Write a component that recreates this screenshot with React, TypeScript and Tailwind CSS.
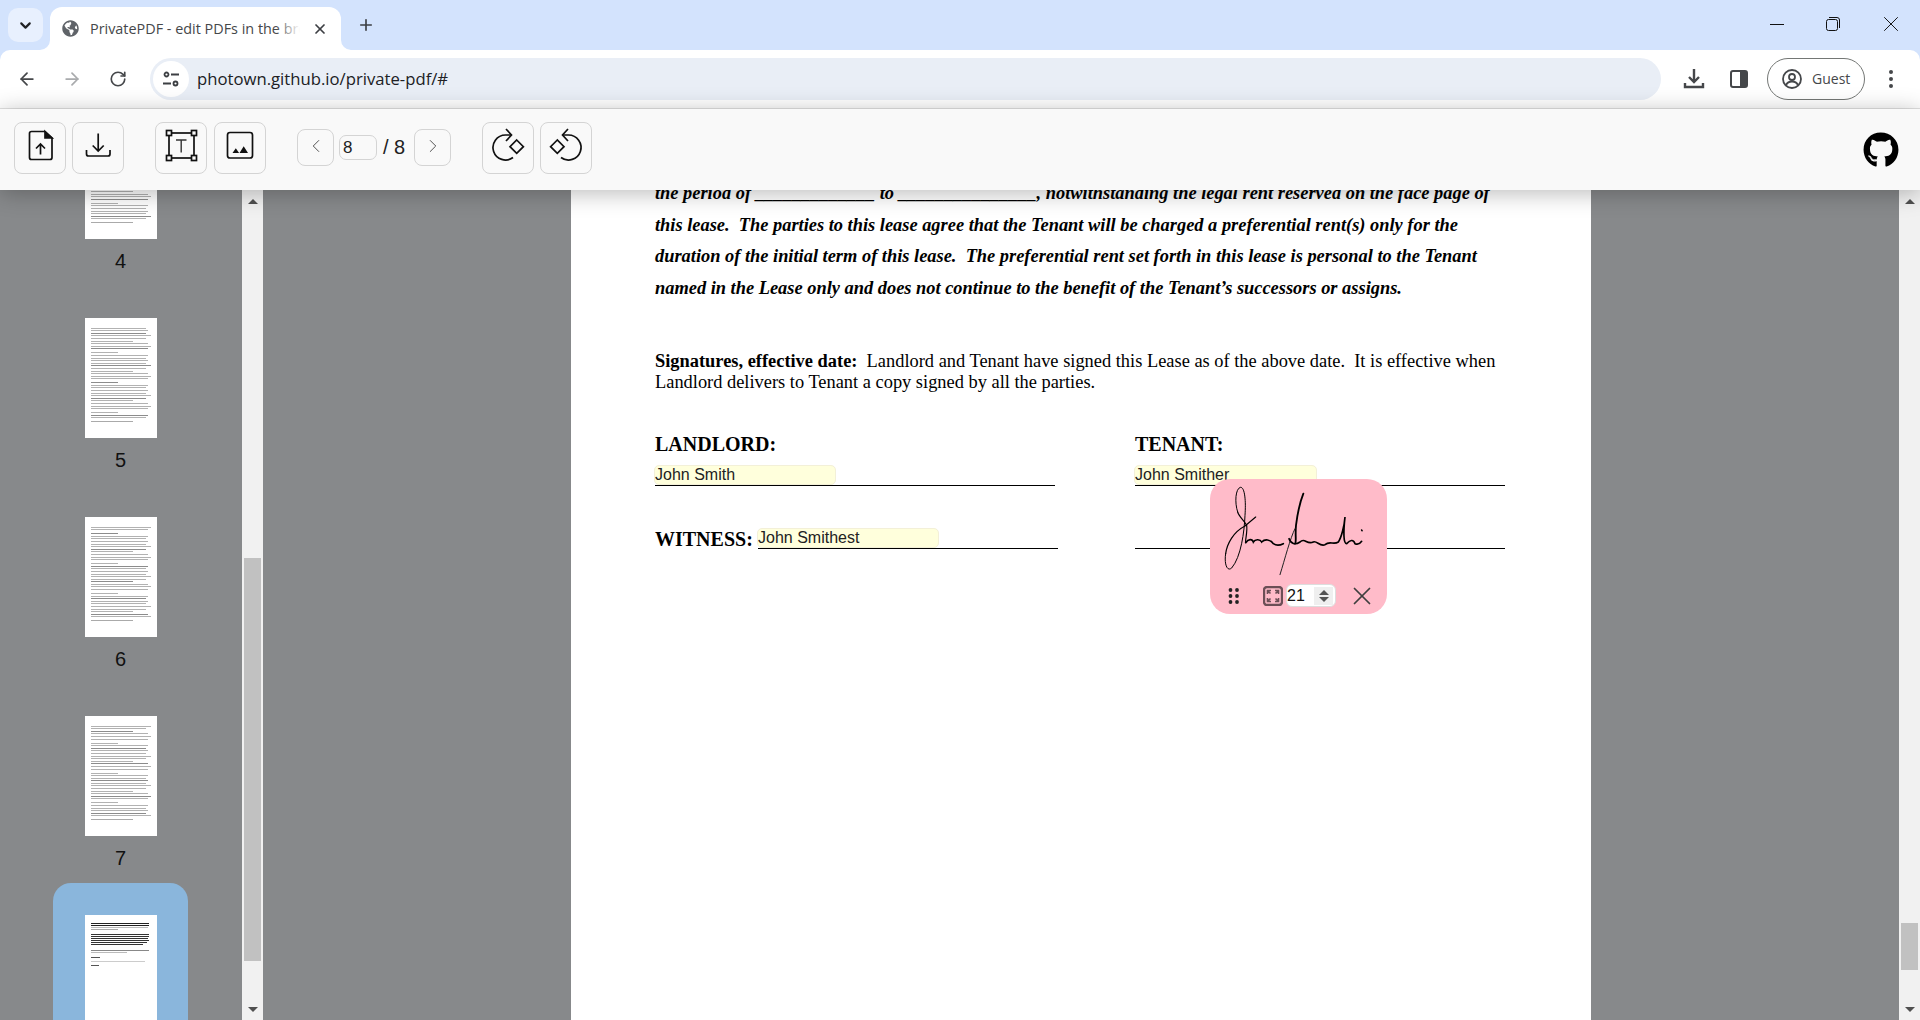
import { ArrowLeft, ArrowRight, ChevronDown, ChevronLeft, ChevronRight, Plus, RotateCw, X } from "lucide-react";
import { FaGithub, FaGlobeAmericas } from "react-icons/fa";

type Row = { w: number; c?: string; mt?: number; h?: number };

const textRows = (seed: number): Row[] => {
	const rows: Row[] = [];
	for (let i = 0; i < 34; i++) {
		const v = (i * 7 + seed * 5) % 11;
		rows.push({
			w: v === 0 ? 45 : v === 5 ? 70 : 92 + (v % 3) * 4,
			c: i % 6 === 2 ? "#8c8c8c" : "#b2b2b2",
			mt: v === 0 ? 3 : 1.6,
			h: 1,
		});
	}
	return rows;
};

const lastPageRows: Row[] = [
	{ w: 98, c: "#222", h: 1, mt: 0 },
	{ w: 98, c: "#222", h: 1, mt: 1 },
	{ w: 95, c: "#bbb", h: 1, mt: 1 },
	{ w: 45, c: "#aaa", h: 1, mt: 1 },
	{ w: 97, c: "#333", h: 1, mt: 4 },
	{ w: 98, c: "#333", h: 1, mt: 1 },
	{ w: 96, c: "#333", h: 1, mt: 1 },
	{ w: 98, c: "#333", h: 1, mt: 1 },
	{ w: 94, c: "#333", h: 1, mt: 1 },
	{ w: 88, c: "#333", h: 1, mt: 1 },
	{ w: 98, c: "#888", h: 1, mt: 5 },
	{ w: 60, c: "#bbb", h: 1, mt: 1 },
	{ w: 16, c: "#555", h: 1, mt: 4 },
	{ w: 90, c: "#ccc", h: 1, mt: 3 },
	{ w: 14, c: "#555", h: 1, mt: 3 },
];

function PageThumb({ rows, foot }: { rows: Row[]; foot?: boolean }) {
	return (
		<div className="w-[72px] h-[120px] bg-white px-[6px] pt-[8px] overflow-hidden">
			<div className="blur-[0.5px]">
				{rows.map((r, i) => (
					<div
						key={i}
						style={{ width: `${r.w}%`, height: r.h, marginTop: r.mt, backgroundColor: r.c }}
					/>
				))}
				{foot && <div className="mt-[3px] w-[70%] h-px bg-[#aaa]" />}
			</div>
		</div>
	);
}

function SidebarItem({ n, selected }: { n: number; selected?: boolean }) {
	return (
		<div className={`w-[135px] ml-[53px] pt-8 pb-[13px] flex flex-col items-center shrink-0 rounded-[18px] ${selected ? "bg-[#8ab6dc]" : ""}`}>
			<PageThumb rows={selected ? lastPageRows : textRows(n)} foot={!selected} />
			{!selected && <div className="mt-[10px] h-6 leading-6 text-[20px] text-[#111]">{n}</div>}
		</div>
	);
}

function ScrollBar({ before, thumb }: { before: string; thumb: string }) {
	return (
		<div className="w-[21px] shrink-0 bg-[#f1f1f1] flex flex-col items-center">
			<div className="h-[14px] w-full flex items-end justify-center">
				<div className="w-0 h-0 border-x-[5px] border-x-transparent border-b-[5px] border-b-[#505050]" />
			</div>
			<div className={`${before} shrink-0`} />
			<div className={`${thumb} w-[17px] bg-[#c1c1c1] shrink-0`} />
			<div className="flex-1" />
			<div className="h-[17px] w-full flex items-start justify-center pt-1">
				<div className="w-0 h-0 border-x-[5px] border-x-transparent border-t-[5px] border-t-[#505050]" />
			</div>
		</div>
	);
}

function ToolButton({ children }: { children: React.ReactNode }) {
	return (
		<button className="w-[52px] h-[52px] shrink-0 rounded-[8px] border border-[#d4d4d4] bg-[#f9f9f9]">
			{children}
		</button>
	);
}

function Icon({ children, className }: { children: React.ReactNode; className?: string }) {
	return (
		<svg width="50" height="50" viewBox="0 0 50 50" fill="none" stroke="#111" strokeWidth="1.7" className={className}>
			{children}
		</svg>
	);
}

function RotateIcon({ className }: { className?: string }) {
	return (
		<Icon className={className}>
			<path d="M28 12H22.5A12.5 12.5 0 1 0 30 34.5" />
			<path d="M23 6l5.500 6-5.500 6" />
			<path d="M33.700 17l6.700 6.700-6.700 6.700-6.700-6.700Z" />
		</Icon>
	);
}

function Tab() {
	return (
		<div className="relative ml-[7px] mt-[7px] w-[291px] h-[43px] bg-white rounded-t-[12px] flex items-center pl-[12px] pr-[13px]">
			<svg width="10" height="10" viewBox="0 0 10 10" className="absolute -left-[10px] bottom-0">
				<path d="M10 0V10H0A10 10 0 0 0 10 0Z" fill="#fff" />
			</svg>
			<svg width="10" height="10" viewBox="0 0 10 10" className="absolute -right-[10px] bottom-0">
				<path d="M0 0V10H10A10 10 0 0 1 0 0Z" fill="#fff" />
			</svg>
			<FaGlobeAmericas size={17} className="text-[#5f6368] shrink-0" />
			<div className="relative ml-[11px] w-[210px] overflow-hidden whitespace-nowrap text-[14.4px] text-[#45474a] font-['Open_Sans',sans-serif]">
				PrivatePDF - edit PDFs in the browser
				<div className="absolute right-0 inset-y-0 w-6 bg-gradient-to-r from-transparent to-white" />
			</div>
			<X size={16} strokeWidth={2.6} className="ml-auto text-[#3c3f43]" />
		</div>
	);
}

function BrowserChrome() {
	return (
		<div className="shrink-0">
			<div className="h-[50px] bg-[#d3e3fd] flex items-start">
				<div className="ml-2 mt-2 w-[35px] h-[34px] rounded-[10px] bg-[#e8f0fe] flex items-center justify-center">
					<ChevronDown size={17} strokeWidth={3} className="text-[#202124]" />
				</div>
				<Tab />
				<Plus size={18} strokeWidth={2.2} className="ml-4 mt-4 text-[#3c3f43]" />
				<div className="ml-auto mt-[11px] flex items-center">
					<div className="w-[14px] h-px bg-[#111] mr-[42px]" />
					<svg width="14" height="14" viewBox="0 0 14 14" fill="none" stroke="#111" className="mr-[38px]">
						<rect x="0.5" y="2.5" width="11" height="11" rx="2" />
						<path d="M3 .5h8a2.5 2.5 0 0 1 2.5 2.5v8" />
					</svg>
					<X size={26} strokeWidth={0.9} className="mr-4 text-[#111]" />
				</div>
			</div>
			<div className="h-[59px] bg-[#d3e3fd]">
				<div className="h-[58px] bg-white rounded-t-[10px] flex items-center">
					<ArrowLeft size={20} strokeWidth={2.1} className="ml-[17px] text-[#45474a]" />
					<ArrowRight size={20} strokeWidth={2.1} className="ml-[25px] text-[#a9abad]" />
					<RotateCw size={18} strokeWidth={2.2} className="ml-[27px] text-[#45474a]" />
					<div className="ml-[23px] w-[1511px] h-[42px] rounded-full bg-[#e9eef6] flex items-center pl-[3px]">
						<div className="w-9 h-9 rounded-full bg-white flex items-center justify-center">
							<svg width="18" height="18" viewBox="0 0 18 18" fill="none" stroke="#3c3f43" strokeWidth="1.8">
								<circle cx="4.5" cy="4.5" r="2" />
								<path d="M9 4.5h8M1 13.5h8" />
								<circle cx="13.5" cy="13.5" r="2" />
							</svg>
						</div>
						<span className="ml-[8px] text-[16.7px] text-[#202124] font-['Open_Sans',sans-serif]">photown.github.io/private-pdf/#</span>
					</div>
					<svg width="22" height="22" viewBox="0 0 22 22" fill="none" stroke="#45474a" strokeWidth="2.4" className="ml-[22px]">
						<path d="M11 1v12M6 9l5 5 5-5" />
						<path d="M2 15v4h18v-4" />
					</svg>
					<svg width="18" height="18" viewBox="0 0 18 18" className="ml-[25px]">
						<rect x="1" y="1" width="16" height="16" rx="2" fill="none" stroke="#45474a" strokeWidth="2" />
						<rect x="10" y="1" width="7" height="16" fill="#45474a" />
					</svg>
					<div className="ml-[19px] w-[98px] h-[42px] rounded-full border border-[#747775] flex items-center pl-[14px]">
						<svg width="20" height="20" viewBox="0 0 20 20" fill="none" stroke="#45474a" strokeWidth="1.8">
							<circle cx="10" cy="10" r="9" />
							<circle cx="10" cy="8" r="3" />
							<path d="M4 16c1.5-3 3.5-3.5 6-3.5s4.5.5 6 3.5" />
						</svg>
						<span className="ml-[10px] pb-px text-[14px] text-[#45474a] font-['Open_Sans',sans-serif]">Guest</span>
					</div>
					<div className="ml-[24px] flex flex-col gap-[3px]">
						<div className="w-1 h-1 rounded-full bg-[#45474a]" />
						<div className="w-1 h-1 rounded-full bg-[#45474a]" />
						<div className="w-1 h-1 rounded-full bg-[#45474a]" />
					</div>
				</div>
				<div className="h-px bg-[#e3e3e3]" />
			</div>
		</div>
	);
}

function Toolbar() {
	return (
		<div className="relative z-10 h-[81px] shrink-0 bg-[#f9f9f9] shadow-[0_3px_22px_rgba(0,0,0,0.28)] flex items-start pt-[13px] pl-[14px] text-[#222]">
			<div className="flex gap-[6px]">
				<ToolButton>
					<Icon>
						<path d="M16.5 8.5H30L37 15V34.5a2 2 0 0 1-2 2H16.5a2 2 0 0 1-2-2V10.5a2 2 0 0 1 2-2Z" />
						<path d="M30 8.5L37 15H30Z" fill="#111" />
						<path d="M25.5 31.5V21M21 25.500l4.500-4.500 4.500 4.500" />
					</Icon>
				</ToolButton>
				<ToolButton>
					<Icon>
						<path d="M13.5 27v4a2 2 0 0 0 2 2H35a2 2 0 0 0 2-2v-4" />
						<path d="M25.2 10.5V28M19.7 22.5l5.500 5.500 5.500-5.500" />
					</Icon>
				</ToolButton>
			</div>
			<div className="ml-[31px] flex gap-[7px]">
				<ToolButton>
					<Icon>
						<rect x="13" y="10" width="25" height="25" />
						<path d="M20 17h10.5M25.2 17v12.5" stroke="#333" strokeWidth="1.4" />
						<g fill="#f9f9f9">
							<rect x="10.5" y="7.5" width="5" height="5" />
							<rect x="35.5" y="7.5" width="5" height="5" />
							<rect x="10.5" y="32.5" width="5" height="5" />
							<rect x="35.5" y="32.5" width="5" height="5" />
						</g>
					</Icon>
				</ToolButton>
				<ToolButton>
					<Icon>
						<rect x="12.5" y="9.5" width="25" height="25.5" rx="2.5" />
						<path d="M17.5 30l3.3-4.800 3.3 4.800ZM24.5 30l4.200-6.800 4.300 6.800Z" fill="#111" stroke="none" />
					</Icon>
				</ToolButton>
			</div>
			<div className="ml-[31px] mt-[7px] flex items-start">
				<button className="w-[37px] h-[37px] rounded-[8px] border border-[#d4d4d4] flex items-center justify-center pb-1">
					<ChevronLeft size={22} strokeWidth={1} className="text-[#444]" />
				</button>
				<input
					readOnly
					value="8"
					className="ml-[5px] mt-[6px] w-[38px] h-[25px] rounded-[7px] border border-[#d4d4d4] pl-[3px] text-[17px] text-[#222] font-['Liberation_Sans',sans-serif]"
				/>
				<span className="ml-[6px] w-[31px] h-[37px] leading-[37px] text-[20px] font-['Liberation_Sans',sans-serif]">/ 8</span>
				<button className="w-[37px] h-[37px] rounded-[8px] border border-[#d4d4d4] flex items-center justify-center pb-1">
					<ChevronRight size={22} strokeWidth={1} className="text-[#444]" />
				</button>
			</div>
			<div className="ml-[31px] flex gap-[6px]">
				<ToolButton>
					<RotateIcon />
				</ToolButton>
				<ToolButton>
					<RotateIcon className="-scale-x-100" />
				</ToolButton>
			</div>
			<FaGithub size={36} className="ml-auto mr-[21px] mt-[10px] text-black" />
		</div>
	);
}

function SignatureWidget() {
	return (
		<div className="absolute left-[639px] top-[301px] w-[177px] h-[135px] rounded-[20px] bg-[#ffbbc9] flex flex-col">
			<svg width="170" height="100" viewBox="0 0 510 300" fill="none" stroke="#000" strokeLinecap="round" className="ml-[5px] mt-[3px] shrink-0">
				<path d="M68 90C58 60 62 20 76 16C90 14 93 60 90 100C88 150 78 225 50 258C36 270 27 245 32 215" strokeWidth="3" />
				<path d="M32 215C36 185 55 150 90 132L122 105" strokeWidth="3.5" />
				<path d="M68 90C72 105 88 115 95 130C98 150 90 175 92 182" strokeWidth="3.5" />
				<path d="M92 182C100 170 112 170 115 180C120 172 135 170 140 180C150 170 165 172 175 185C185 192 195 190 205 185" strokeWidth="5" />
				<path d="M265 35C255 60 248 90 243 130C240 160 245 180 240 185" strokeWidth="5.5" />
				<path d="M240 140C225 170 210 230 195 278" strokeWidth="3" stroke="#222" />
				<path d="M222 170C228 185 240 190 255 180C270 165 275 190 295 180C305 175 315 195 330 188C345 175 355 190 370 180C380 165 388 130 390 105C385 150 385 185 395 185C405 175 415 170 420 185C430 190 435 185 440 178" strokeWidth="5" />
				<path d="M440 144l1 2" strokeWidth="5" />
			</svg>
			<div className="relative flex items-center h-[23px] mt-[2px]">
				<svg width="12" height="18" viewBox="0 0 12 18" fill="#222" className="ml-[18px]">
					<circle cx="2.5" cy="3" r="1.9" />
					<circle cx="9" cy="3" r="1.9" />
					<circle cx="2.5" cy="9" r="1.9" />
					<circle cx="9" cy="9" r="1.9" />
					<circle cx="2.5" cy="15" r="1.9" />
					<circle cx="9" cy="15" r="1.9" />
				</svg>
				<svg width="20" height="20" viewBox="0 0 20 20" fill="none" stroke="#6c4e56" className="ml-[23px] mt-[1px]">
					<rect x="1" y="1" width="18" height="18" rx="3" strokeWidth="2.4" />
					<path d="M4.5 4.500l3 3M4.500 8V4.500H8M15.500 4.500l-3 3M12 4.500h3.500V8M4.500 15.500l3-3M4.500 12v3.500H8M15.500 15.500l-3-3M12 15.500h3.500V12" strokeWidth="1.6" />
				</svg>
				<div className="ml-[3px] w-[50px] h-[23px] rounded-[6px] bg-white border border-[#ddd] flex items-center text-[16px] text-[#111] font-['Liberation_Sans',sans-serif]">
					21
					<div className="ml-auto mr-[2px] w-[19px] h-[18px] bg-[#efefef] flex flex-col items-center justify-center gap-[2px]">
						<div className="w-0 h-0 border-x-[5px] border-x-transparent border-b-[5px] border-b-[#555]" />
						<div className="w-0 h-0 border-x-[5px] border-x-transparent border-t-[5px] border-t-[#555]" />
					</div>
				</div>
				<X size={30} strokeWidth={1.4} className="ml-[11px] text-[#3f3f3f]" />
			</div>
		</div>
	);
}

function FieldLine({ value, lineWidth, inputWidth }: { value?: string; lineWidth: string; inputWidth?: string }) {
	return (
		<div className={`relative h-[21px] border-b border-black ${lineWidth}`}>
			{value && (
				<input
					readOnly
					value={value}
					className={`absolute -left-px top-0 h-5 ${inputWidth} rounded-[5px] border border-[#f3f0d8] bg-[#ffffdc] text-[16px] text-[#222] leading-5 font-['Liberation_Sans',sans-serif] outline-none`}
				/>
			)}
		</div>
	);
}

function PdfPage() {
	const italic = "whitespace-pre font-bold italic text-[18.4px] leading-[31.7px]";
	return (
		<div className="relative w-[1020px] h-[900px] -mt-3 bg-white pl-[84px] text-black font-['Liberation_Serif',serif]">
			<div className={italic}>the period of _____________ to _______________, notwithstanding the legal rent reserved on the face page of</div>
			<div className={italic}>this lease.  The parties to this lease agree that the Tenant will be charged a preferential rent(s) only for the</div>
			<div className={italic}>duration of the initial term of this lease.  The preferential rent set forth in this lease is personal to the Tenant</div>
			<div className={italic}>named in the Lease only and does not continue to the benefit of the Tenant’s successors or assigns.</div>
			<div className="mt-[46px] text-[18.4px] leading-[21px] whitespace-pre">
				<div>
					<b>Signatures, effective date:</b>  Landlord and Tenant have signed this Lease as of the above date.  It is effective when
				</div>
				<div>Landlord delivers to Tenant a copy signed by all the parties.</div>
			</div>
			<div className="mt-[39px] flex">
				<div className="w-[480px]">
					<div className="font-bold text-[20px] leading-6">LANDLORD:</div>
					<div className="mt-[9px]">
						<FieldLine value="John Smith" lineWidth="w-[400px]" inputWidth="w-[182px]" />
					</div>
				</div>
				<div>
					<div className="font-bold text-[20px] leading-6">TENANT:</div>
					<div className="mt-[9px]">
						<FieldLine value="John Smither" lineWidth="w-[370px]" inputWidth="w-[183px]" />
					</div>
				</div>
			</div>
			<div className="mt-[41px] flex items-end">
				<div className="w-[480px] flex items-end">
					<div className="w-[103px] font-bold text-[20px] leading-6 -mb-[2px] whitespace-nowrap">WITNESS:</div>
					<FieldLine value="John Smithest" lineWidth="w-[300px]" inputWidth="w-[182px]" />
				</div>
				<FieldLine lineWidth="w-[370px]" />
			</div>
			<SignatureWidget />
		</div>
	);
}

export default function App() {
	return (
		<div className="w-[1920px] h-[1020px] flex flex-col overflow-hidden bg-[#87898b] font-['Liberation_Sans',sans-serif]">
			<BrowserChrome />
			<Toolbar />
			<div className="flex-1 flex min-h-0">
				<div className="w-[242px] shrink-0 bg-[#87898b] overflow-hidden">
					<div className="-mt-[103px] flex flex-col">
						<SidebarItem n={4} />
						<SidebarItem n={5} />
						<SidebarItem n={6} />
						<SidebarItem n={7} />
						<SidebarItem n={8} selected />
					</div>
				</div>
				<ScrollBar before="h-[354px]" thumb="h-[403px]" />
				<div className="flex-1 flex justify-center overflow-hidden bg-[#87898b]">
					<PdfPage />
				</div>
				<ScrollBar before="h-[719px]" thumb="h-[47px]" />
			</div>
		</div>
	);
}
